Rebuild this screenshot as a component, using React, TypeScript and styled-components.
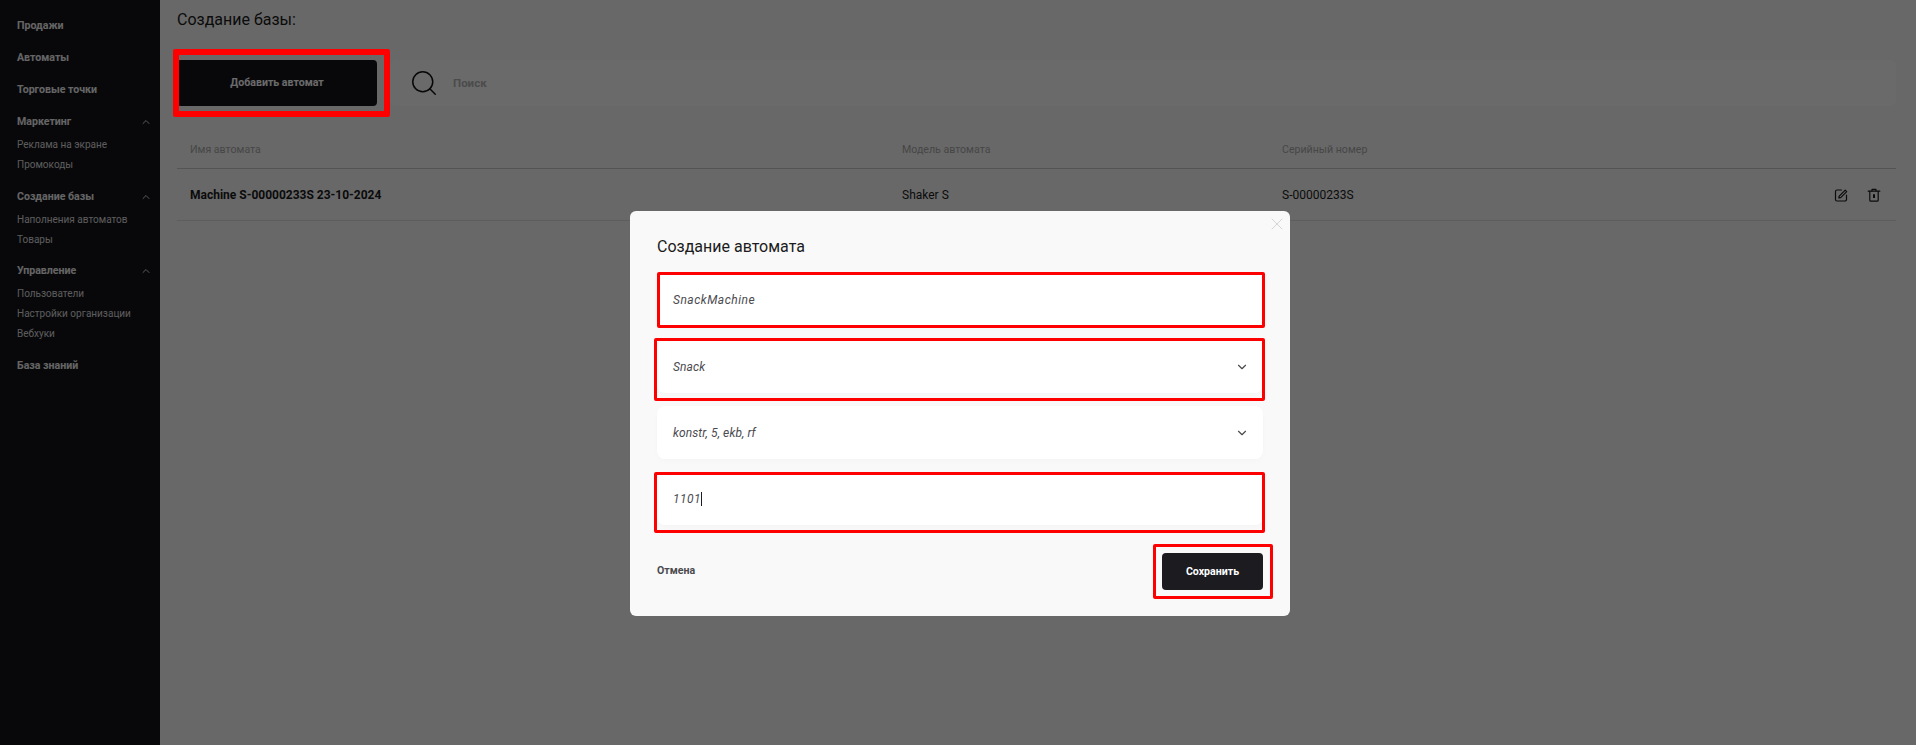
import React from 'react';
import styled, { createGlobalStyle } from 'styled-components';
import { ChevronDown, ChevronUp, Search, X } from 'lucide-react';

const GlobalStyle = createGlobalStyle`
  html, body {
    margin: 0;
    padding: 0;
    height: 100%;
    overflow: hidden;
    font-family: Roboto, "Liberation Sans", sans-serif;
  }
  #root { height: 100%; }
`;

const Page = styled.div`
  display: flex;
  width: 1916px;
  height: 745px;
  background: #f8f8f8;
`;

const Sidebar = styled.nav`
  width: 160px;
  flex: none;
  box-sizing: border-box;
  padding: 18px 0 0 17px;
  background: #14141b;
  color: #f0f0f0;
`;

const NavItem = styled.div`
  font-size: 10.6px;
  font-weight: 700;
  line-height: 16px;
  margin-bottom: 16px;
`;

const NavHead = styled.div`
  display: flex;
  justify-content: space-between;
  align-items: center;
  font-size: 10.6px;
  font-weight: 700;
  line-height: 16px;
  padding-right: 8px;
  & > svg { color: #d8d8d8; }
`;

const NavGroup = styled.div`
  margin-bottom: 13.5px;
`;

const SubList = styled.div`
  margin-top: 5px;
`;

const SubItem = styled.div`
  font-size: 10px;
  line-height: 20px;
  color: #dcdcdc;
`;

const Main = styled.main`
  flex: 1;
  padding: 0 20px 0 17px;
`;

const Title = styled.h1`
  margin: 0;
  font-size: 16px;
  font-weight: 400;
  line-height: 40px;
  color: #1b1b20;
`;

const Toolbar = styled.div`
  display: flex;
  margin-top: 20px;
  height: 46px;
`;

const AddButton = styled.button`
  width: 200px;
  padding: 0 0 2px;
  border: 0;
  border-radius: 4px;
  background: #14141b;
  color: #ffffff;
  font: 700 10.6px Roboto, sans-serif;
`;

const SearchBar = styled.div`
  flex: 1;
  display: flex;
  align-items: center;
  gap: 14px;
  margin-left: 13px;
  padding-left: 19px;
  border-radius: 6px;
  background: #fdfdfd;
  color: #111116;
`;

const SearchHint = styled.span`
  font-size: 11.5px;
  font-weight: 700;
  color: #b4b4b4;
  padding-bottom: 1px;
`;

const TableHead = styled.div`
  display: grid;
  grid-template-columns: 712px 380px 1fr;
  height: 62px;
  align-items: end;
  padding: 0 0 0 13px;
  border-bottom: 1px solid #c8c8c8;
  font-size: 10.6px;
  color: #a8a8a8;
  & > span { padding-bottom: 12px; }
`;

const TableRow = styled.div`
  display: grid;
  grid-template-columns: 712px 380px 1fr auto;
  height: 51px;
  align-items: center;
  padding: 0 15px 0 13px;
  border-bottom: 1px solid #dedede;
  font-size: 12px;
  color: #1b1b20;
`;

const MachineName = styled.span`
  font-size: 12px;
  font-weight: 700;
`;

const RowActions = styled.div`
  display: flex;
  gap: 19px;
  color: #1b1b20;
`;

const Backdrop = styled.div`
  position: absolute;
  inset: 0;
  width: 1916px;
  height: 745px;
  background: rgba(0, 0, 0, 0.58);
`;

const Modal = styled.div`
  position: absolute;
  left: 630px;
  top: 211px;
  width: 660px;
  height: 405px;
  box-sizing: border-box;
  padding: 24px 27px 0;
  border-radius: 6px;
  background: #f9f9f9;
`;

const CloseIcon = styled(X)`
  position: absolute;
  top: 3px;
  right: 3px;
  color: #cfcfcf;
`;

const ModalTitle = styled.h2`
  margin: 0 0 14px;
  font-size: 16px;
  font-weight: 400;
  line-height: 24px;
  color: #1b1b20;
`;

const Fields = styled.div`
  display: flex;
  flex-direction: column;
  gap: 13px;
  & > :first-child { margin-bottom: 1px; }
`;

const Field = styled.div`
  display: flex;
  align-items: center;
  justify-content: space-between;
  height: 53px;
  box-sizing: border-box;
  padding: 0 16px;
  border-radius: 8px;
  background: #ffffff;
  box-shadow: 0 2px 6px rgba(0, 0, 0, 0.02);
  font-size: 12px;
  font-style: italic;
  letter-spacing: 0.5px;
  color: #4a4a4f;
`;

const SelectField = styled(Field)`
  padding-right: 14px;
  letter-spacing: 0.1px;
`;

const FieldValue = styled.span`
  display: inline-flex;
  align-items: center;
`;

const Caret = styled.span`
  width: 1px;
  height: 14px;
  background: #1b1b20;
`;

const ModalFooter = styled.div`
  display: flex;
  align-items: center;
  justify-content: space-between;
  margin-top: 28px;
`;

const CancelLink = styled.span`
  font-size: 10.6px;
  font-weight: 700;
  color: #4a4a4f;
  padding-bottom: 2px;
`;

const SaveButton = styled.button`
  width: 101px;
  height: 37px;
  padding: 0 0 1px;
  border: 0;
  border-radius: 4px;
  background: #1b1b20;
  color: #ffffff;
  font: 700 10.6px Roboto, sans-serif;
`;

// red annotation frames drawn over the screenshot
const Mark = styled.div<{ $x: number; $y: number; $w: number; $h: number; $b?: number }>`
  position: absolute;
  left: ${(p) => p.$x}px;
  top: ${(p) => p.$y}px;
  width: ${(p) => p.$w}px;
  height: ${(p) => p.$h}px;
  box-sizing: border-box;
  border: ${(p) => p.$b ?? 3}px solid #ff0000;
  border-radius: 2px;
`;

const EditIcon = () => (
  <svg width="14" height="14" viewBox="0 0 14 14" fill="none" stroke="currentColor" strokeWidth="1.2" strokeLinecap="round" strokeLinejoin="round">
    <path d="M7.5 2H3a1.5 1.5 0 0 0-1.5 1.5v8A1.5 1.5 0 0 0 3 13h8a1.5 1.5 0 0 0 1.5-1.5V7" />
    <path d="M5.2 8.2 4.8 10l1.9-.4 6-6-1.5-1.5z" />
  </svg>
);

const TrashIcon = () => (
  <svg width="14" height="14" viewBox="0 0 14 14" fill="none" stroke="currentColor" strokeWidth="1.2" strokeLinecap="round" strokeLinejoin="round">
    <path d="M1.2 3.2h11.6" />
    <path d="M5 3V1.4h4V3" />
    <path d="M2.8 3.4v8.8a1 1 0 0 0 1 1h6.4a1 1 0 0 0 1-1V3.4" />
    <path d="M7 6.3v3.8" strokeWidth="2" strokeLinecap="butt" />
  </svg>
);

const App: React.FC = () => {
  return (
    <>
      <GlobalStyle />
      <Page>
        <Sidebar>
          <NavItem>Продажи</NavItem>
          <NavItem>Автоматы</NavItem>
          <NavItem>Торговые точки</NavItem>
          <NavGroup>
            <NavHead>Маркетинг <ChevronUp size={12} /></NavHead>
            <SubList>
              <SubItem>Реклама на экране</SubItem>
              <SubItem>Промокоды</SubItem>
            </SubList>
          </NavGroup>
          <NavGroup>
            <NavHead>Создание базы <ChevronUp size={12} /></NavHead>
            <SubList>
              <SubItem>Наполнения автоматов</SubItem>
              <SubItem>Товары</SubItem>
            </SubList>
          </NavGroup>
          <NavGroup>
            <NavHead>Управление <ChevronUp size={12} /></NavHead>
            <SubList>
              <SubItem>Пользователи</SubItem>
              <SubItem>Настройки организации</SubItem>
              <SubItem>Вебхуки</SubItem>
            </SubList>
          </NavGroup>
          <NavItem>База знаний</NavItem>
        </Sidebar>
        <Main>
          <Title>Создание базы:</Title>
          <Toolbar>
            <AddButton>Добавить автомат</AddButton>
            <SearchBar>
              <Search size={30} strokeWidth={1.2} />
              <SearchHint>Поиск</SearchHint>
            </SearchBar>
          </Toolbar>
          <TableHead>
            <span>Имя автомата</span>
            <span>Модель автомата</span>
            <span>Серийный номер</span>
          </TableHead>
          <TableRow>
            <MachineName>Machine S-00000233S 23-10-2024</MachineName>
            <span>Shaker S</span>
            <span>S-00000233S</span>
            <RowActions>
              <EditIcon />
              <TrashIcon />
            </RowActions>
          </TableRow>
        </Main>
      </Page>
      <Backdrop />
      <Modal>
        <CloseIcon size={20} strokeWidth={1} />
        <ModalTitle>Создание автомата</ModalTitle>
        <Fields>
          <Field>SnackMachine</Field>
          <SelectField>Snack <ChevronDown size={14} /></SelectField>
          <SelectField>konstr, 5, ekb, rf <ChevronDown size={14} /></SelectField>
          <Field><FieldValue>1101<Caret /></FieldValue></Field>
        </Fields>
        <ModalFooter>
          <CancelLink>Отмена</CancelLink>
          <SaveButton>Сохранить</SaveButton>
        </ModalFooter>
      </Modal>
      <Mark $x={173} $y={49} $w={217} $h={68} $b={6} />
      <Mark $x={657} $y={272} $w={608} $h={56} />
      <Mark $x={654} $y={338} $w={611} $h={63} />
      <Mark $x={654} $y={472} $w={611} $h={61} />
      <Mark $x={1153} $y={544} $w={120} $h={55} />
    </>
  );
};

export default App;
